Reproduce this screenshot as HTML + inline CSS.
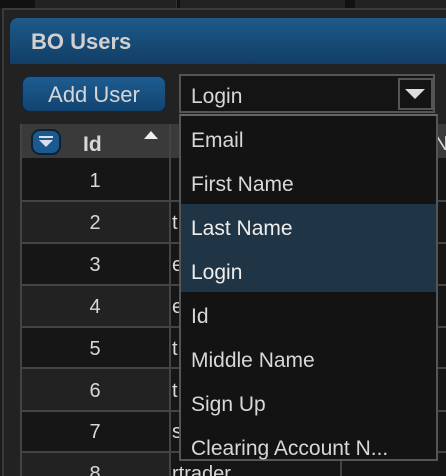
<!DOCTYPE html><html style="height:476px;overflow:hidden"><head><style>
body{margin:0;width:446px;height:476px;overflow:hidden;background:#1c1c1c;font-family:"Liberation Sans",sans-serif;position:relative}
div{position:absolute;box-sizing:border-box}
.t{color:#d8d8d8;font-size:20px}
.r{left:21px;width:148px;height:42px}
.l{left:21px;width:425px;height:2px;background:#444}
</style></head><body>
<div style="left:0;top:0;width:446px;height:8px;background:#111"></div>
<div style="left:35px;top:0;width:142px;height:8px;background:#222;border-right:1px solid #333"></div>
<div style="left:180px;top:0;width:165px;height:8px;background:#222"></div>
<div style="left:355px;top:0;width:91px;height:8px;background:#222"></div>
<div style="left:2px;top:8px;width:444px;height:468px;border-left:2px solid #3a3a3a;border-top:2px solid #3a3a3a;background:#222"></div>
<div style="left:10px;top:18px;width:436px;height:46px;border-radius:8px 0 0 0;background:linear-gradient(#1d5a8a,#123e66)"></div>
<div class="t" style="left:31px;top:29px;font-size:22px;font-weight:bold;color:#d0d0d0">BO Users</div>
<div style="left:22px;top:76px;width:144px;height:36px;border-radius:8px;background:linear-gradient(#1e5c90,#124470);border:1px solid #0a2a48"></div>
<div class="t" style="left:22px;top:82px;width:144px;text-align:center;font-size:22px;color:#d6d6d6">Add User</div>
<div style="left:21px;top:124px;width:425px;height:35px;background:#3a3a3a"></div>
<div style="left:21px;top:158px;width:425px;height:318px;background:#161616"></div>
<div class="r" style="top:201px;background:#222"></div>
<div class="r" style="top:285px;background:#222"></div>
<div class="r" style="top:368px;background:#222"></div>
<div class="r" style="top:452px;background:#222"></div>
<div class="l" style="top:200px"></div>
<div class="l" style="top:242px"></div>
<div class="l" style="top:284px"></div>
<div class="l" style="top:326px"></div>
<div class="l" style="top:367px"></div>
<div class="l" style="top:410px"></div>
<div class="l" style="top:451px"></div>
<div style="left:20px;top:124px;width:2px;height:352px;background:#444"></div>
<div style="left:169px;top:124px;width:2px;height:352px;background:#444"></div>
<div style="left:340px;top:124px;width:2px;height:352px;background:#444"></div>
<div style="left:31px;top:129px;width:30px;height:26px;border-radius:9px;background:#1a5a90;border:2px solid #0c2236"></div>
<svg style="position:absolute;left:38px;top:135px" width="16" height="14"><rect x="1" y="1" width="14" height="2" fill="#dde"/><path d="M1 5H15L8 12Z" fill="#dde"/></svg>
<div class="t" style="left:83px;top:133px;font-weight:bold;font-size:21px">Id</div>
<svg style="position:absolute;left:144px;top:131px" width="14" height="8"><path d="M0 8H14L7 0Z" fill="#eee"/></svg>
<div class="t" style="left:21px;top:170px;width:148px;text-align:center">1</div>
<div class="t" style="left:21px;top:212px;width:148px;text-align:center">2</div>
<div class="t" style="left:21px;top:254px;width:148px;text-align:center">3</div>
<div class="t" style="left:21px;top:296px;width:148px;text-align:center">4</div>
<div class="t" style="left:21px;top:338px;width:148px;text-align:center">5</div>
<div class="t" style="left:21px;top:380px;width:148px;text-align:center">6</div>
<div class="t" style="left:21px;top:421px;width:148px;text-align:center">7</div>
<div class="t" style="left:21px;top:463px;width:148px;text-align:center">8</div>
<div class="t" style="left:172px;top:212px">t</div>
<div class="t" style="left:172px;top:254px">e</div>
<div class="t" style="left:172px;top:296px">e</div>
<div class="t" style="left:172px;top:338px">t</div>
<div class="t" style="left:172px;top:380px">t</div>
<div class="t" style="left:172px;top:421px">s</div>
<div class="t" style="left:172px;top:463px">rtrader</div>
<div class="t" style="left:434px;top:133px">N</div>
<div style="left:179px;top:74px;width:256px;height:39px;background:#141414;border:2px solid #555"></div>
<div class="t" style="left:191px;top:85px;font-size:21px">Login</div>
<div style="left:398px;top:78px;width:35px;height:32px;border:2px solid #555"></div>
<svg style="position:absolute;left:405px;top:89px" width="20" height="10"><path d="M0 0H20L10 10Z" fill="#ddd"/></svg>
<div style="left:179px;top:114px;width:259px;height:347px;background:#131313;border:2px solid #555;border-top-color:#666"></div>
<div style="left:181px;top:204px;width:255px;height:88px;background:#1f3444"></div>
<div class="t" style="left:191px;top:129px;font-size:21px">Email</div>
<div class="t" style="left:191px;top:173px;font-size:21px">First Name</div>
<div class="t" style="left:191px;top:217px;font-size:21px;color:#eee">Last Name</div>
<div class="t" style="left:191px;top:261px;font-size:21px;color:#eee">Login</div>
<div class="t" style="left:191px;top:305px;font-size:21px">Id</div>
<div class="t" style="left:191px;top:349px;font-size:21px">Middle Name</div>
<div class="t" style="left:191px;top:393px;font-size:21px">Sign Up</div>
<div class="t" style="left:191px;top:437px;font-size:21px">Clearing Account N...</div>
</body></html>
